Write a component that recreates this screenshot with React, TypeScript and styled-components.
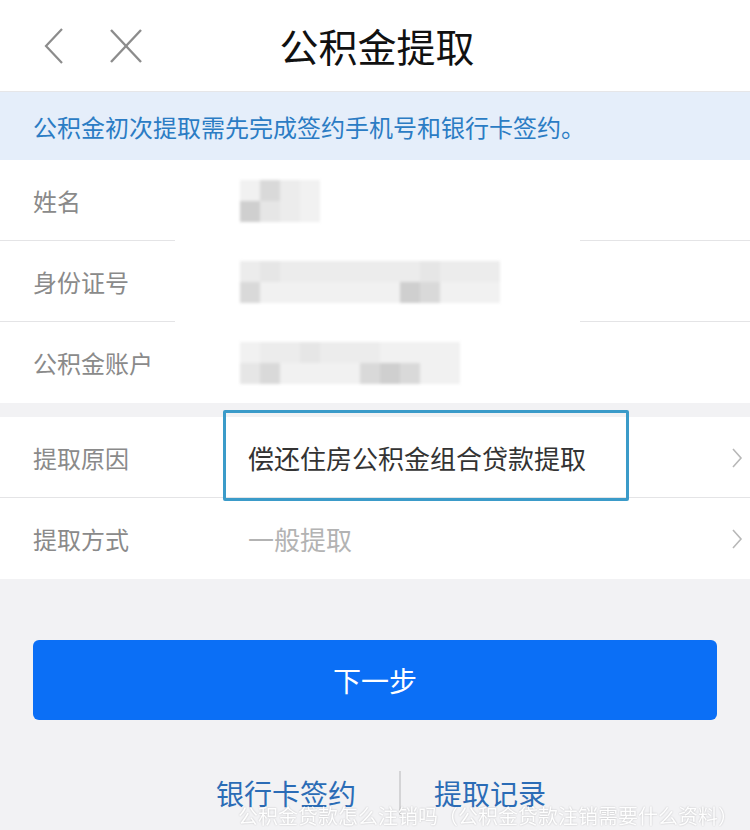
import React from 'react';
import styled, {createGlobalStyle} from 'styled-components';

const GlobalStyle = createGlobalStyle`
  html, body {
    margin: 0;
    padding: 0;
    background: #f2f2f4;
    font-family: "Noto Sans CJK SC", "Noto Sans", sans-serif;
  }
`;

const Page = styled.div`
  position: relative;
  width: 750px;
  height: 830px;
  overflow: hidden;
  background: #f2f2f4;
`;

const Header = styled.div`
  height: 91px;
  background: #fff;
  border-bottom: 1px solid #e6e6e8;
  display: flex;
  align-items: center;
  position: relative;
  .nav {
    display: flex;
    align-items: center;
    gap: 38px;
    padding-left: 40px;
  }
  .title {
    position: absolute;
    left: 0;
    right: 0;
    text-align: center;
    font-size: 39px;
    color: #111;
    line-height: 91px;
    padding-left: 4px;
    pointer-events: none;
  }
`;

const Notice = styled.div`
  height: 68px;
  background: #e5eefa;
  color: #2b7cc4;
  font-size: 24px;
  display: flex;
  align-items: center;
  padding-left: 33px;
`;

const Group = styled.div<{gap?: number}>`
  background: #fff;
  margin-top: ${p => p.gap || 0}px;
`;

const Row = styled.div<{divider?: boolean; split?: boolean}>`
  position: relative;
  height: 81px;
  display: flex;
  align-items: center;
  padding: 0 6px 0 33px;
  background-image: ${p => p.divider
    ? p.split
      ? 'linear-gradient(to right, #e4e4e6 0, #e4e4e6 175px, transparent 175px, transparent 580px, #e4e4e6 580px)'
      : 'linear-gradient(#e4e4e6, #e4e4e6)'
    : 'none'};
  background-size: 100% 1px;
  background-position: bottom;
  background-repeat: no-repeat;
  .label {
    width: 215px;
    font-size: 24px;
    color: #8a8a8a;
  }
  .value {
    flex: 1;
    font-size: 26px;
    color: #333;
  }
  .value.placeholder {
    color: #b3b3b3;
  }
`;

const Mosaic = styled.div<{w: number}>`
  width: ${p => p.w}px;
  height: 42px;
  display: grid;
  grid-template-columns: repeat(${p => Math.round(p.w / 20)}, 1fr);
  grid-template-rows: 1fr 1fr;
  filter: blur(1.5px);
  margin-left: -8px;
`;

const Cell = styled.div<{shade: string}>`
  background: ${p => p.shade};
`;

const Highlight = styled.div`
  position: absolute;
  left: 223px;
  top: -7px;
  width: 400px;
  height: 85px;
  border: 3px solid #3b9bc9;
  border-radius: 2px;
  pointer-events: none;
`;

const NextButton = styled.button`
  display: block;
  margin: 61px auto 0;
  width: 684px;
  height: 80px;
  border: none;
  border-radius: 6px;
  background: #0b6ff6;
  color: #fff;
  font-family: inherit;
  font-size: 28px;
`;

const Links = styled.div`
  margin-top: 51px;
  display: flex;
  justify-content: center;
  align-items: center;
  padding-left: 12px;
  a {
    color: #2b6cb6;
    font-size: 28px;
    text-decoration: none;
  }
  .sep {
    width: 2px;
    height: 44px;
    background: #d4d4d6;
    margin: 0 33px 0 43px;
  }
`;

const Watermark = styled.div`
  position: absolute;
  right: 12px;
  bottom: 0;
  color: #fff;
  font-size: 20px;
  line-height: 28px;
  text-shadow: 0 0 2px rgba(0,0,0,.25);
  opacity: .95;
`;

const Chevron = () => (
  <svg width="14" height="24" viewBox="0 0 14 24">
    <polyline points="3,3 11,12 3,21" fill="none" stroke="#b8b8b8" strokeWidth="1.6"/>
  </svg>
);

const shades = ['#e6e6e6', '#d9d9d9', '#ececec', '#cfcfcf', '#f1f1f1', '#e0e0e0'];

function Blur({w, pattern}: {w: number; pattern: number[]}) {
  const cols = Math.round(w / 20);
  const cells = [];
  for (let i = 0; i < cols * 2; i++) {
    cells.push(<Cell key={i} shade={shades[pattern[i % pattern.length]]}/>);
  }
  return <Mosaic w={w}>{cells}</Mosaic>;
}

export default function App() {
  return (
    <Page>
      <GlobalStyle/>
      <Header>
        <div className="nav">
          <svg width="30" height="40" viewBox="0 0 30 40">
            <polyline points="22,3 6,20 22,37" fill="none" stroke="#8c8c8c" strokeWidth="2.2"/>
          </svg>
          <svg width="36" height="36" viewBox="0 0 36 36">
            <line x1="3" y1="2" x2="33" y2="34" stroke="#8c8c8c" strokeWidth="2.4"/>
            <line x1="33" y1="2" x2="3" y2="34" stroke="#8c8c8c" strokeWidth="2.4"/>
          </svg>
        </div>
        <div className="title">公积金提取</div>
      </Header>
      <Notice>公积金初次提取需先完成签约手机号和银行卡签约。</Notice>
      <Group>
        <Row divider split>
          <span className="label">姓名</span>
          <Blur w={80} pattern={[4, 1, 2, 4, 3, 0, 2, 4]}/>
        </Row>
        <Row divider split>
          <span className="label">身份证号</span>
          <Blur w={260} pattern={[2, 0, 2, 2, 2, 2, 2, 2, 2, 0, 2, 2, 2, 1, 4, 4, 4, 4, 4, 4, 4, 3, 1, 4, 4, 4]}/>
        </Row>
        <Row>
          <span className="label">公积金账户</span>
          <Blur w={220} pattern={[4, 2, 2, 0, 2, 2, 2, 4, 4, 4, 4, 0, 1, 4, 4, 4, 4, 1, 3, 1, 4, 4]}/>
        </Row>
      </Group>
      <Group gap={14}>
        <Row divider>
          <span className="label">提取原因</span>
          <span className="value">偿还住房公积金组合贷款提取</span>
          <Chevron/>
          <Highlight/>
        </Row>
        <Row>
          <span className="label">提取方式</span>
          <span className="value placeholder">一般提取</span>
          <Chevron/>
        </Row>
      </Group>
      <NextButton>下一步</NextButton>
      <Links>
        <a href="#">银行卡签约</a>
        <span className="sep"/>
        <a href="#">提取记录</a>
      </Links>
      <Watermark>公积金贷款怎么注销吗（公积金贷款注销需要什么资料）</Watermark>
    </Page>
  );
}
